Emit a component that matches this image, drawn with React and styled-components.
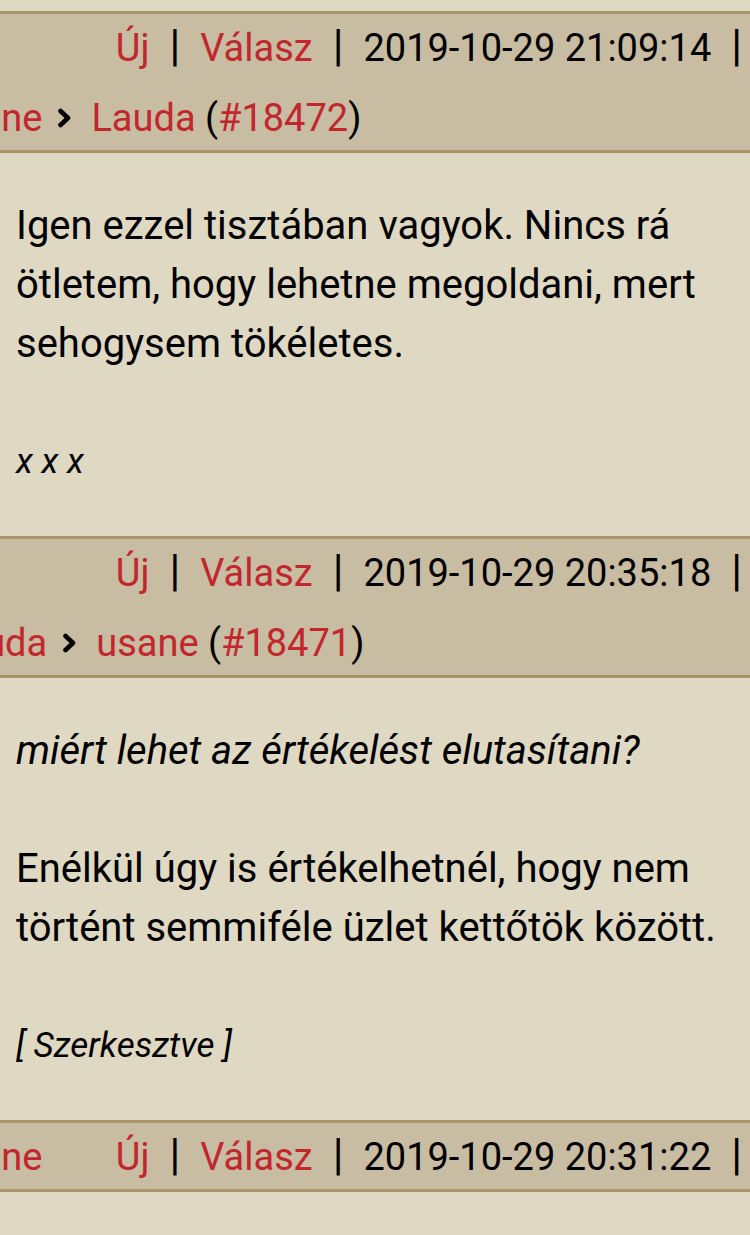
import React from "react";
import styled, {createGlobalStyle} from "styled-components";

const GlobalStyle = createGlobalStyle`
  html, body {
    margin: 0;
    padding: 0;
    background: #dfd8c3;
  }
  body {
    font-family: Roboto, "Noto Sans", "Liberation Sans", sans-serif;
    overflow: hidden;
  }
`;

const posts = [
  {
    from: "usane",
    fromCut: 60,
    to: "Lauda",
    id: 18472,
    date: "2019-10-29 21:09:14",
    body: [{text: "Igen ezzel tisztában vagyok. Nincs rá ötletem, hogy lehetne megoldani, mert sehogysem tökéletes."}],
    sig: "x x x"
  },
  {
    from: "Lauda",
    fromCut: 57,
    to: "usane",
    id: 18471,
    date: "2019-10-29 20:35:18",
    body: [
      {text: "miért lehet az értékelést elutasítani?", italic: true},
      {text: "Enélkül úgy is értékelhetnél, hogy nem történt semmiféle üzlet kettőtök között."}
    ],
    sig: "[ Szerkesztve ]"
  },
  {
    author: "usane",
    authorCut: 60,
    date: "2019-10-29 20:31:22"
  }
];

const Chevron = () => (
  <ChevronIcon viewBox="0 0 15 20" width="15" height="20">
    <path d="M3.5 3 L11 10 L3.5 17" fill="none" stroke="#000" strokeWidth="4.6" strokeLinecap="round" strokeLinejoin="round" />
  </ChevronIcon>
);

function Actions({date}) {
  return (
    <Links>
      <Red>Új</Red>
      <Bar>|</Bar>
      <Red>Válasz</Red>
      <Bar>|</Bar>
      <span>{date}</span>
      <Bar>|</Bar>
    </Links>
  );
}

function Post({post}) {
  return (
    <>
      <Header>
        <Row>
          {post.author && <Red style={{marginLeft: -post.authorCut}}>{post.author}</Red>}
          <Actions date={post.date} />
        </Row>
        {post.to && (
          <Row>
            <Chain style={{marginLeft: -post.fromCut}}>
              <Red>{post.from}</Red>
              <Chevron />
              <span>
                <Red>{post.to}</Red> (<Red>#{post.id}</Red>)
              </span>
            </Chain>
          </Row>
        )}
      </Header>
      {post.body && (
        <Body>
          {post.body.map((p, i) => (
            <Para key={i} italic={p.italic}>
              {p.text}
            </Para>
          ))}
          <Sig>{post.sig}</Sig>
        </Body>
      )}
    </>
  );
}

export default function App() {
  return (
    <Page>
      <GlobalStyle />
      {posts.map((p) => (
        <Post key={p.date} post={p} />
      ))}
    </Page>
  );
}

const Page = styled.div`
  width: 750px;
  height: 1235px;
  padding-top: 11px;
  box-sizing: border-box;
  overflow: hidden;
  background: #dfd8c3;
`;

const Header = styled.div`
  background: #c8bca2;
  border-top: 3px solid #a89467;
  border-bottom: 3px solid #a89467;
  display: flex;
  flex-direction: column;
  gap: 4px;
  font-size: 38px;
  color: #000;
`;

const Row = styled.div`
  height: 66px;
  padding-top: 2px;
  box-sizing: border-box;
  display: flex;
  align-items: center;
  white-space: nowrap;
  line-height: 1;
`;

const Links = styled.div`
  margin-left: auto;
  padding-right: 8px;
  display: flex;
  align-items: center;
  gap: 20px;
`;

const Bar = styled.span`
  font-size: 44px;
  font-weight: 400;
  transform: translateY(-2px);
`;

const Red = styled.span`
  color: #c1272d;
`;

const Chain = styled.div`
  display: flex;
  align-items: center;
  gap: 15px;
`;

const ChevronIcon = styled.svg`
  display: block;
  margin-right: 4px;
`;

const Body = styled.div`
  padding: 43px 6px 50px 16px;
  color: #000;
`;

const Para = styled.p`
  margin: 0;
  font-size: 40px;
  line-height: 59px;
  font-style: ${(p) => (p.italic ? "italic" : "normal")};
  & + & {
    margin-top: 59px;
  }
`;

const Sig = styled.div`
  margin-top: 65px;
  font-size: 35px;
  line-height: 48px;
  font-style: italic;
`;
